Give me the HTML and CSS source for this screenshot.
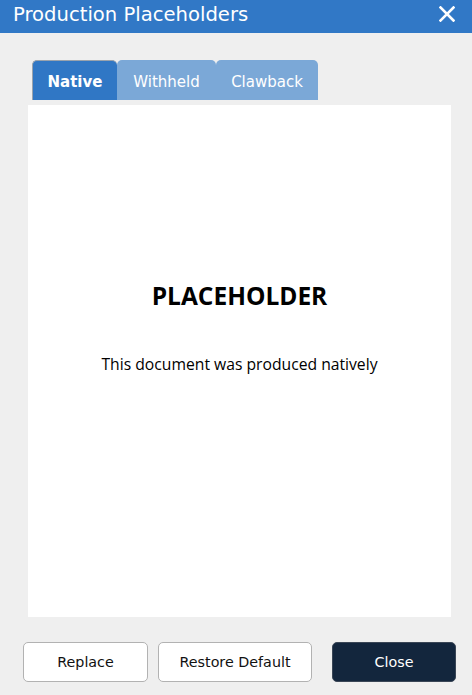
FILE: index.html
```html
<!DOCTYPE html>
<html lang="en">
<head>
<meta charset="utf-8">
<title>Production Placeholders</title>
<link rel="stylesheet" href="styles.css">
</head>
<body>
<div class="dialog">
  <header class="titlebar">
    <h1 class="title">Production Placeholders</h1>
    <button class="close-x" aria-label="Close">
      <svg width="16" height="16" viewBox="0 0 16 16"><path d="M1.5 1.5 L14.5 14.5 M14.5 1.5 L1.5 14.5" stroke="#fff" stroke-width="2.6" stroke-linecap="square" fill="none"/></svg>
    </button>
  </header>
  <main class="body">
    <nav class="tabs">
      <div class="tab active">Native</div>
      <div class="tab">Withheld</div>
      <div class="tab">Clawback</div>
    </nav>
    <section class="panel">
      <div class="ph-title">PLACEHOLDER</div>
      <div class="ph-text">This document was produced natively</div>
    </section>
    <footer class="actions">
      <button class="btn">Replace</button>
      <button class="btn wide">Restore Default</button>
      <button class="btn primary">Close</button>
    </footer>
  </main>
</div>
</body>
</html>
```

FILE: styles.css
```css
html, body {
  margin: 0;
  padding: 0;
  background: #efefef;
}
.dialog {
  width: 472px;
  height: 695px;
  background: #efefef;
  font-family: "DejaVu Sans", Verdana, sans-serif;
}
.titlebar {
  height: 33px;
  background: #3178c6;
  display: flex;
  align-items: center;
  justify-content: space-between;
  padding: 0 17px 0 13px;
  box-sizing: border-box;
}
.title {
  margin: 0;
  font-weight: normal;
  font-size: 19.6px;
  color: #fff;
  line-height: 1;
  margin-top: -4px;
}
.close-x {
  border: 0;
  background: none;
  padding: 0;
  width: 16px;
  height: 16px;
  margin-top: -6px;
  display: flex;
}
.body {
  padding: 27px 21px 0 28px;
}
.tabs {
  display: flex;
  margin-left: 4px;
  height: 40px;
}
.tab {
  height: 40px;
  box-sizing: border-box;
  border-radius: 5px 5px 0 0;
  background: #7ba8d7;
  color: #fff;
  font-size: 15px;
  display: flex;
  align-items: center;
  justify-content: center;
  padding-top: 3px;
}
.tab:nth-child(2) { width: 99px; }
.tab:nth-child(3) { width: 102px; }
.tab.active {
  width: 85px;
  background: #3077c5;
  font-weight: bold;
  border: 1px solid #9aa3ad;
  border-bottom: 0;
  border-right: 0;
}
.panel {
  margin-top: 5px;
  width: 423px;
  height: 512px;
  background: #fff;
  box-sizing: border-box;
  padding-top: 175px;
  text-align: center;
  font-family: "Open Sans", "Noto Sans", sans-serif;
  color: #000;
}
.ph-title {
  font-size: 24.5px;
  font-weight: bold;
  line-height: 32px;
}
.ph-text {
  margin-top: 41px;
  font-size: 15.7px;
  line-height: 22px;
}
.actions {
  display: flex;
  margin-top: 25px;
  margin-left: -5px;
  margin-right: -5px;
}
.btn {
  flex-shrink: 0;
  height: 40px;
  width: 125px;
  box-sizing: border-box;
  border: 1px solid #b2b2b2;
  border-radius: 5px;
  background: #fff;
  color: #111;
  font-family: "DejaVu Sans", Verdana, sans-serif;
  font-size: 14.3px;
  padding: 0;
  margin-right: 10px;
}
.btn.wide {
  width: 154px;
  margin-right: 20px;
}
.btn.primary {
  width: 124px;
  background: #13263d;
  border-color: #3a4656;
  color: #fff;
  margin-right: 0;
}
```
